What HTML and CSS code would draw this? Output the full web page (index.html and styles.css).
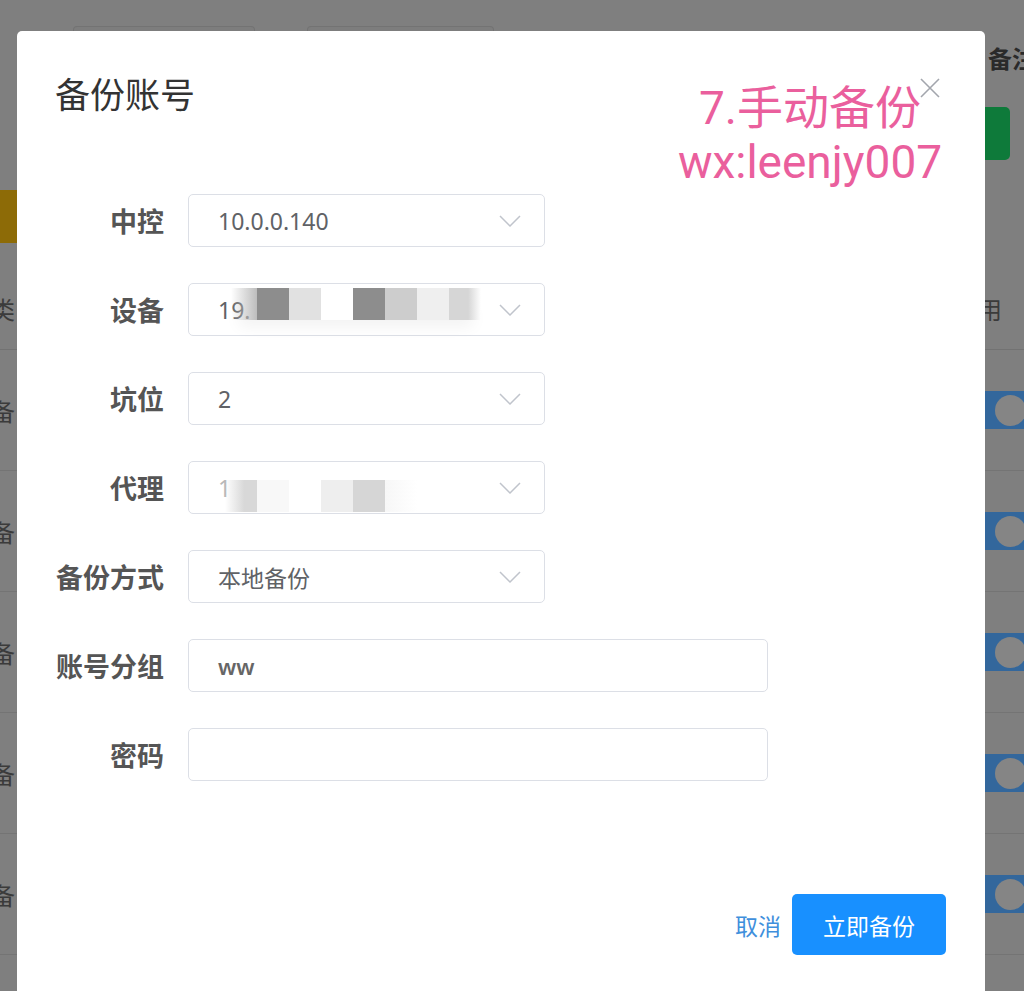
FILE: index.html
```html
<!DOCTYPE html>
<html lang="zh-CN">
<head>
<meta charset="utf-8">
<title>备份账号</title>
<link rel="stylesheet" href="styles.css">
</head>
<body>
<div class="app">
  <div class="filters">
    <div class="filter f1"></div>
    <div class="filter f2"></div>
  </div>
  <div class="remark">备注</div>
  <div class="green-btn"></div>
  <div class="tag-yellow"></div>

  <div class="cell c-left r5 head"><span class="cut">类</span></div>
  <div class="cell c-mid r5 head"></div>
  <div class="cell c-right r5 head"><span class="cut-r">用</span></div>

  <div class="cell c-left r6"><span class="cut">备</span></div>
  <div class="cell c-mid r6"></div>
  <div class="cell c-right r6"><span class="switch"><span class="knob"></span></span></div>

  <div class="cell c-left r7"><span class="cut">备</span></div>
  <div class="cell c-mid r7"></div>
  <div class="cell c-right r7"><span class="switch"><span class="knob"></span></span></div>

  <div class="cell c-left r8"><span class="cut">备</span></div>
  <div class="cell c-mid r8"></div>
  <div class="cell c-right r8"><span class="switch"><span class="knob"></span></span></div>

  <div class="cell c-left r9"><span class="cut">备</span></div>
  <div class="cell c-mid r9"></div>
  <div class="cell c-right r9"><span class="switch"><span class="knob"></span></span></div>

  <div class="cell c-left r10"><span class="cut">备</span></div>
  <div class="cell c-mid r10"></div>
  <div class="cell c-right r10"><span class="switch"><span class="knob"></span></span></div>
</div>

<div class="dialog">
  <div class="dlg-head">
    <h2 class="dlg-title">备份账号</h2>
  </div>
  <button class="close" aria-label="关闭">
    <svg width="22" height="22" viewBox="0 0 22 22"><path d="M2 2 L20 20 M20 2 L2 20" stroke="#a3a6ad" stroke-width="1.6" fill="none"/></svg>
  </button>
  <div class="watermark">
    <div>7.手动备份</div>
    <div>wx:leenjy007</div>
  </div>

  <div class="form">
    <div class="row">
      <label class="label">中控</label>
      <div class="field"><span>10.0.0.140</span><svg class="chev" width="22" height="12" viewBox="0 0 22 12"><path d="M1 1 L11 11 L21 1" stroke="#c0c4cc" stroke-width="1.5" fill="none"/></svg></div>
    </div>
    <div class="row">
      <label class="label">设备</label>
      <div class="field"><span>19.</span><svg class="chev" width="22" height="12" viewBox="0 0 22 12"><path d="M1 1 L11 11 L21 1" stroke="#c0c4cc" stroke-width="1.5" fill="none"/></svg>
        <div class="mask mask-a">
          <i class="px fade-l" style="background:#bdbdbd"></i>
          <i class="px" style="background:#8d8d8d"></i>
          <i class="px" style="background:#e1e1e1"></i>
          <i class="px" style="background:#ffffff"></i>
          <i class="px" style="background:#8d8d8d"></i>
          <i class="px" style="background:#cdcdcd"></i>
          <i class="px" style="background:#efefef"></i>
          <i class="px fade-r" style="background:#d6d6d6"></i>
        </div>
      </div>
    </div>
    <div class="row">
      <label class="label">坑位</label>
      <div class="field"><span>2</span><svg class="chev" width="22" height="12" viewBox="0 0 22 12"><path d="M1 1 L11 11 L21 1" stroke="#c0c4cc" stroke-width="1.5" fill="none"/></svg></div>
    </div>
    <div class="row">
      <label class="label">代理</label>
      <div class="field"><span class="faded">1</span><svg class="chev" width="22" height="12" viewBox="0 0 22 12"><path d="M1 1 L11 11 L21 1" stroke="#c0c4cc" stroke-width="1.5" fill="none"/></svg>
        <div class="mask mask-b">
          <i class="px fade-l" style="background:#d8d8d8"></i>
          <i class="px" style="background:#f8f8f8"></i>
          <i class="px" style="background:#ffffff"></i>
          <i class="px" style="background:#eeeeee"></i>
          <i class="px" style="background:#d6d6d6"></i>
          <i class="px fade-r" style="background:#f7f7f7"></i>
        </div>
      </div>
    </div>
    <div class="row">
      <label class="label">备份方式</label>
      <div class="field"><span>本地备份</span><svg class="chev" width="22" height="12" viewBox="0 0 22 12"><path d="M1 1 L11 11 L21 1" stroke="#c0c4cc" stroke-width="1.5" fill="none"/></svg></div>
    </div>
    <div class="row">
      <label class="label">账号分组</label>
      <div class="field wide"><span class="ww">ww</span></div>
    </div>
    <div class="row">
      <label class="label">密码</label>
      <div class="field wide"></div>
    </div>
  </div>

  <div class="footer">
    <button class="btn-text">取消</button>
    <button class="btn-primary">立即备份</button>
  </div>
</div>
</body>
</html>
```

FILE: styles.css
```css
html, body {
  margin: 0;
  padding: 0;
}
body {
  width: 1024px;
  height: 991px;
  overflow: hidden;
  background: #7f7f7f;
  font-family: "Noto Sans", "Noto Sans CJK SC", sans-serif;
}

/* ---------- dimmed background page ---------- */
.app {
  display: grid;
  grid-template-columns: 17px 1fr 39px;
  grid-template-rows: 26px 74px 70px 90px 90px repeat(5, 121px) 36px;
  width: 1024px;
  height: 991px;
  background: #7f7f7f;
}
.filters {
  grid-column: 2;
  grid-row: 2;
  display: flex;
  gap: 52px;
  padding-left: 56px;
}
.filter {
  height: 40px;
  border: 1px solid #737373;
  border-bottom: none;
  border-radius: 4px 4px 0 0;
  background: #7d7d7d;
}
.f1 { width: 180px; }
.f2 { width: 185px; }

.remark {
  grid-column: 3;
  grid-row: 2;
  margin-top: 17px;
  padding-left: 3px;
  font-family: "Noto Sans CJK SC", sans-serif;
  font-size: 24px;
  line-height: 30px;
  font-weight: 700;
  color: #2a2a2a;
  white-space: nowrap;
  overflow: hidden;
}
.green-btn {
  grid-column: 3;
  grid-row: 3;
  margin-top: 7px;
  width: 25px;
  height: 53px;
  background: #0e7a3a;
  border-radius: 0 5px 5px 0;
}
.tag-yellow {
  grid-column: 1;
  grid-row: 4;
  margin-top: 20px;
  height: 53px;
  background: #8d6b07;
}
.cell {
  border-bottom: 1px solid #747474;
  display: flex;
  align-items: center;
  overflow: hidden;
  font-family: "Noto Sans CJK SC", sans-serif;
  font-size: 24px;
  color: #3b3b3b;
  white-space: nowrap;
}
.r5 { grid-row: 5; }
.r6 { grid-row: 6; }
.r7 { grid-row: 7; }
.r8 { grid-row: 8; }
.r9 { grid-row: 9; }
.r10 { grid-row: 10; }
.head { padding-top: 8px; border-bottom-color: #727272; }
.c-left { grid-column: 1; }
.c-mid { grid-column: 2; }
.c-right { grid-column: 3; }
.cut { margin-left: -9px; }
.cut-r { margin-left: -7px; }

.switch {
  display: flex;
  align-items: center;
  width: 60px;
  height: 38px;
  border-radius: 0 19px 19px 0;
  background: #33679c;
  flex-shrink: 0;
}
.knob {
  margin-left: 10px;
  width: 31px;
  height: 31px;
  border-radius: 50%;
  background: #858585;
}

/* ---------- dialog ---------- */
.dialog {
  position: absolute;
  left: 17px;
  top: 31px;
  width: 968px;
  height: 990px;
  background: #ffffff;
  border-radius: 5px;
}
.dlg-head {
  padding: 42px 38px 0;
}
.dlg-title {
  margin: 0;
  font-family: "Noto Sans CJK SC", sans-serif;
  font-size: 35px;
  line-height: 40px;
  font-weight: 400;
  color: #333333;
}
.close {
  position: absolute;
  left: 902px;
  top: 46px;
  padding: 0;
  border: none;
  background: none;
  width: 22px;
  height: 22px;
  display: block;
}
.close svg { display: block; }
.watermark {
  position: absolute;
  left: 643px;
  top: 50px;
  width: 300px;
  text-align: center;
  font-family: Roboto, "Noto Sans CJK SC", sans-serif;
  font-size: 46px;
  line-height: 54px;
  font-weight: 400;
  color: #ea5f9d;
  white-space: nowrap;
}

.form {
  margin-top: 81px;
  padding-left: 38px;
  display: flex;
  flex-direction: column;
  gap: 36px;
}
.row {
  display: flex;
  align-items: center;
  gap: 24px;
  height: 53px;
}
.label {
  width: 109px;
  text-align: right;
  font-family: "Noto Sans CJK SC", sans-serif;
  font-size: 27px;
  font-weight: 700;
  color: #555555;
  white-space: nowrap;
}
.field {
  position: relative;
  box-sizing: border-box;
  width: 357px;
  height: 53px;
  border: 1px solid #dcdfe6;
  border-radius: 5px;
  display: flex;
  align-items: center;
  justify-content: space-between;
  padding: 0 23px 0 29px;
  font-family: "Noto Sans", "Noto Sans CJK SC", sans-serif;
  font-size: 23px;
  color: #606266;
  white-space: nowrap;
}
.field.wide { width: 580px; }
.chev { display: block; flex-shrink: 0; }
.faded { color: #b8b8b8; }
.ww { font-weight: 600; color: #666666; font-size: 22px; }

.mask {
  position: absolute;
  display: flex;
  height: 32px;
}
.mask-a { left: 42px; top: 4px; box-shadow: 0 14px 16px -8px rgba(0,0,0,0.06); }
.mask-b { left: 36px; top: 18px; }
.px {
  display: block;
  width: 32px;
  height: 32px;
}
.mask-a .fade-l { width: 26px; background: linear-gradient(90deg, rgba(189,189,189,0), #bdbdbd) !important; }
.mask-a .fade-r { background: linear-gradient(90deg, #d6d6d6 60%, rgba(214,214,214,0)) !important; }
.mask-b .fade-l { background: linear-gradient(90deg, rgba(216,216,216,0), #d8d8d8 60%) !important; }
.mask-b .fade-r { background: linear-gradient(90deg, #f7f7f7, rgba(247,247,247,0)) !important; }

.footer {
  margin-top: 113px;
  display: flex;
  justify-content: flex-end;
  align-items: center;
  gap: 11px;
  padding-right: 39px;
}
.btn-text {
  border: none;
  background: none;
  padding: 0;
  font-family: "Noto Sans CJK SC", sans-serif;
  font-size: 23px;
  color: #3f8fdc;
}
.btn-primary {
  width: 154px;
  height: 61px;
  border: none;
  border-radius: 5px;
  background: #1890ff;
  color: #ffffff;
  font-family: "Noto Sans CJK SC", sans-serif;
  font-size: 23px;
  display: flex;
  align-items: center;
  justify-content: center;
}
```
